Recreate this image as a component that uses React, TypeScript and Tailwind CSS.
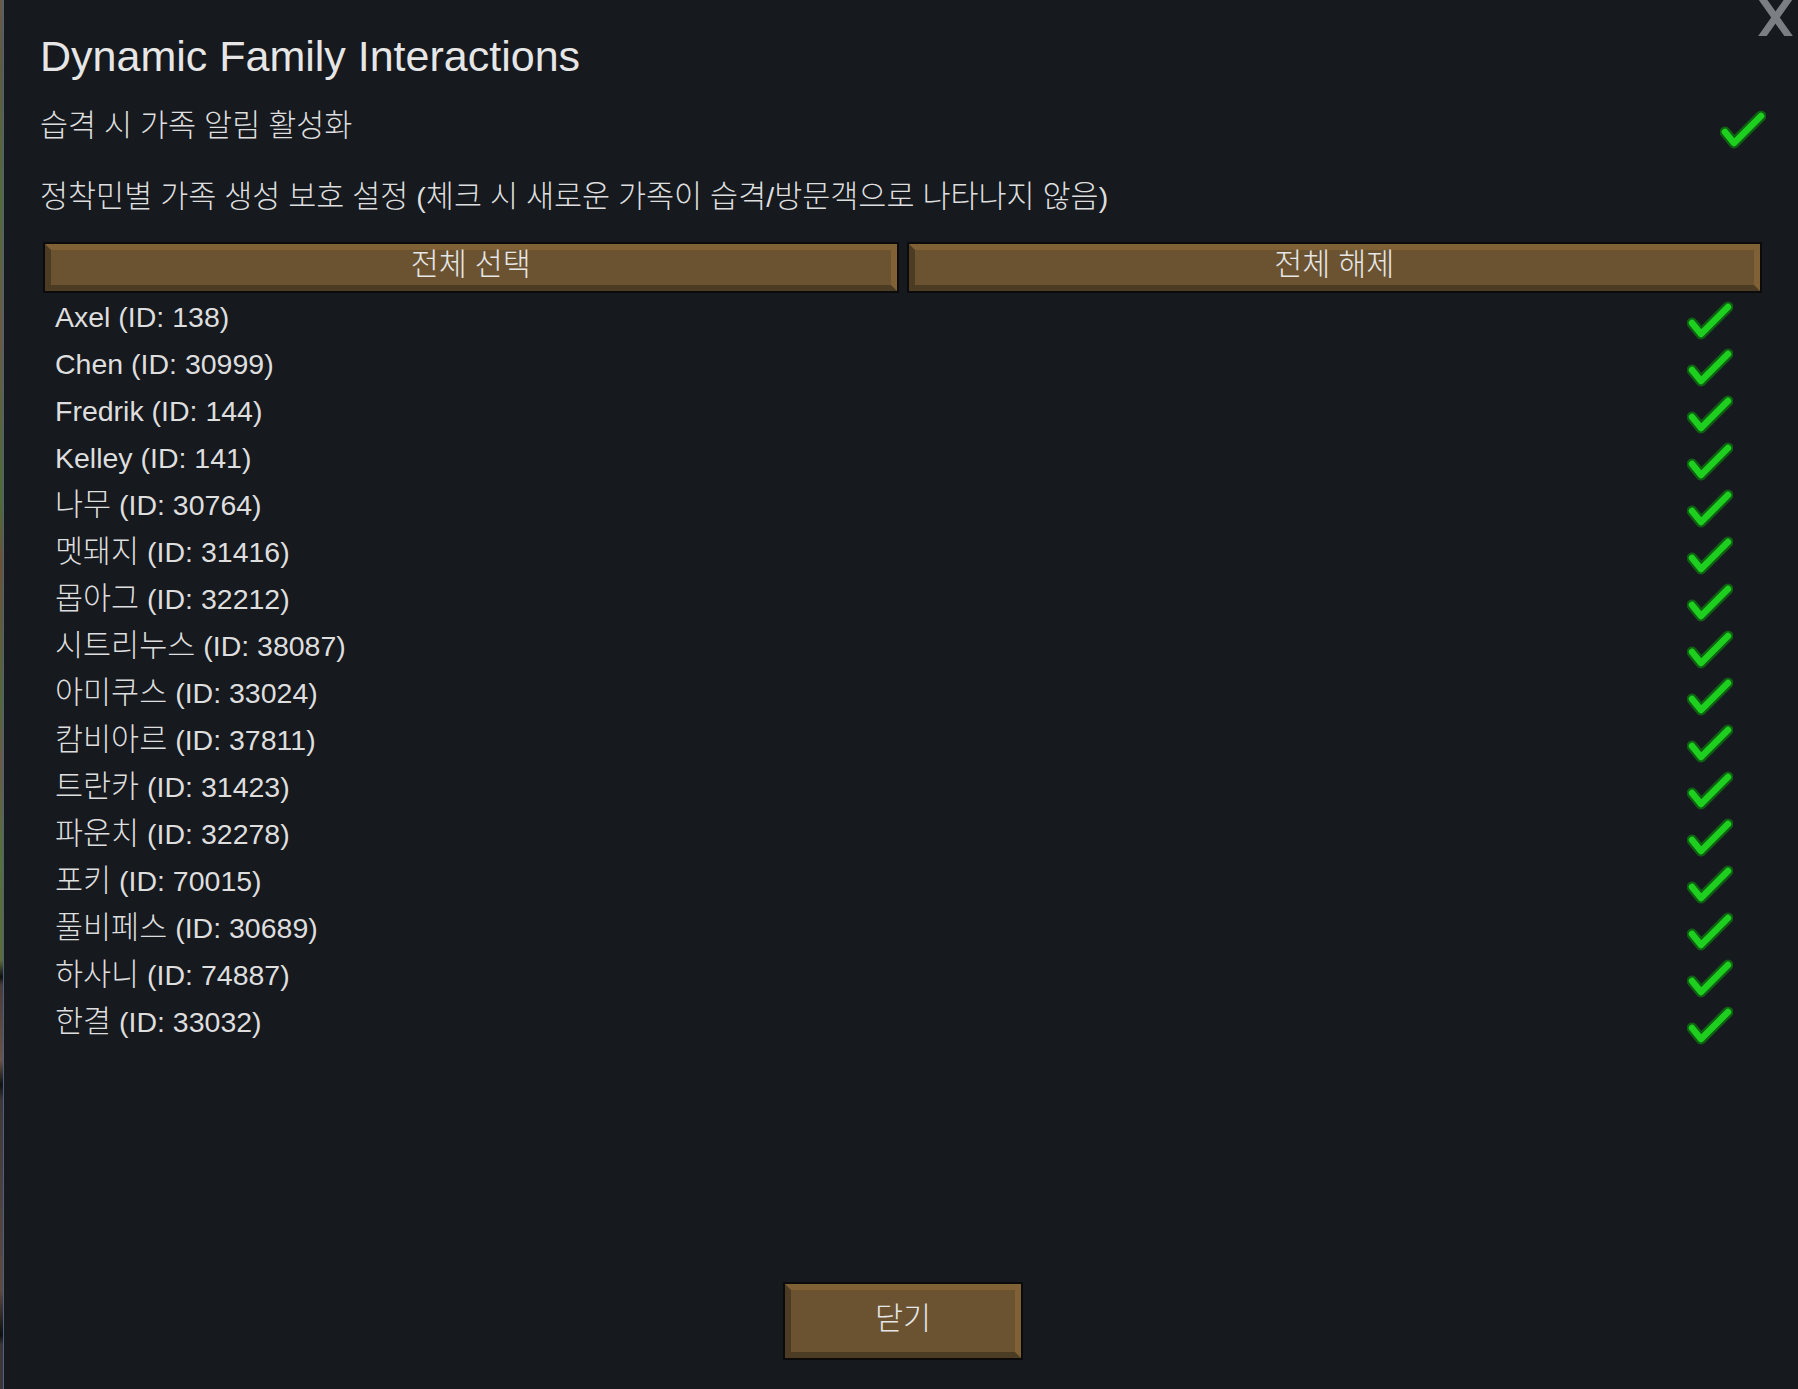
import { ReactNode } from "react";

const colonists = [
  "Axel (ID: 138)",
  "Chen (ID: 30999)",
  "Fredrik (ID: 144)",
  "Kelley (ID: 141)",
  "나무 (ID: 30764)",
  "멧돼지 (ID: 31416)",
  "몹아그 (ID: 32212)",
  "시트리누스 (ID: 38087)",
  "아미쿠스 (ID: 33024)",
  "캄비아르 (ID: 37811)",
  "트란카 (ID: 31423)",
  "파운치 (ID: 32278)",
  "포키 (ID: 70015)",
  "풀비페스 (ID: 30689)",
  "하사니 (ID: 74887)",
  "한결 (ID: 33032)",
];

// hangul runs get a slightly bigger size so widths match the game font
function Txt({ children }: { children: string }) {
  const parts = children.split(/([\u3131-\uD79D]+)/);
  return (
    <span className="text-[28.5px] leading-[28px]">
      {parts.map((p, i) =>
        /[\u3131-\uD79D]/.test(p) ? (
          <span key={i} className="text-[30.5px] font-light">
            {p}
          </span>
        ) : (
          <span key={i}>{p}</span>
        )
      )}
    </span>
  );
}

function Check() {
  return (
    <svg width="46" height="40" viewBox="0 0 46 40" className="shrink-0">
      <polyline points="5,22 14,33 41,6" fill="none" stroke="#0e5f12" strokeWidth="11" strokeLinecap="round" strokeLinejoin="round" />
      <polyline points="5,22 14,33 41,6" fill="none" stroke="#1fcf20" strokeWidth="6.5" strokeLinecap="round" strokeLinejoin="round" />
    </svg>
  );
}

function WoodButton({ children, className = "" }: { children: string; className?: string }) {
  return (
    <div className={`border-2 border-[#0b0b0b] ${className}`}>
      <div className="flex h-full items-center justify-center border-[6px] border-t-[#7f6135] border-r-[#7f6135] border-b-[#4d3c24] border-l-[#4d3c24] bg-[#6b5331] pb-[6px] text-[#e6e6e6]">
        <Txt>{children}</Txt>
      </div>
    </div>
  );
}

function Row({ children, className = "" }: { children: ReactNode; className?: string }) {
  return <div className={`flex items-center justify-between ${className}`}>{children}</div>;
}

export default function App() {
  return (
    <div className="relative flex h-[1389px] w-[1798px] overflow-hidden bg-[#16191e] font-['Liberation_Sans','Noto_Sans_CJK_KR',sans-serif] text-[#dedede]">
      <div className="w-[3px] bg-[linear-gradient(to_bottom,#6a5a48_0px,#5f5a40_60px,#55693a_200px,#6a5a44_330px,#4f6a36_500px,#6b5236_560px,#56663a_700px,#6a5a46_760px,#55703a_860px,#5d6a3a_960px,#101010_977px,#4a3c38_985px,#6b5448_1060px,#121212_1085px,#3f3838_1100px,#5e4a42_1290px,#101010_1335px,#3c3636_1345px)]" />
      <div className="w-px bg-[#4d6282]" />

      <div className="flex flex-1 flex-col pl-[36px] pr-[32px] pt-[35px] pb-[29px]">
        <h1 className="h-[43px] text-[43px] leading-[43px] text-[#e6e6e6]">Dynamic Family Interactions</h1>

        <Row className="mt-[27px] h-[40px]">
          <Txt>습격 시 가족 알림 활성화</Txt>
          <div className="translate-y-[5px]">
            <Check />
          </div>
        </Row>

        <Row className="mt-[31px] h-[40px]">
          <Txt>정착민별 가족 생성 보호 설정 (체크 시 새로운 가족이 습격/방문객으로 나타나지 않음)</Txt>
        </Row>

        <div className="ml-[3px] mt-[26px] grid h-[50px] w-[1719px] grid-cols-2 gap-[8px]">
          <WoodButton>전체 선택</WoodButton>
          <WoodButton>전체 해제</WoodButton>
        </div>

        <div className="ml-[3px] mt-px w-[1719px]">
          {colonists.map((name) => (
            <Row key={name} className="h-[47px] pl-[12px] pr-[29px]">
              <Txt>{name}</Txt>
              <div className="translate-y-[4px]">
                <Check />
              </div>
            </Row>
          ))}
        </div>

        <WoodButton className="mt-auto h-[78px] w-[240px] self-center">닫기</WoodButton>
      </div>

      <svg width="40" height="36" viewBox="0 0 40 36" className="absolute right-[2px] top-0">
        <line x1="5" y1="-3" x2="34" y2="38" stroke="#7b7f83" strokeWidth="7" />
        <line x1="34" y1="-3" x2="5" y2="38" stroke="#7b7f83" strokeWidth="7" />
      </svg>
    </div>
  );
}
